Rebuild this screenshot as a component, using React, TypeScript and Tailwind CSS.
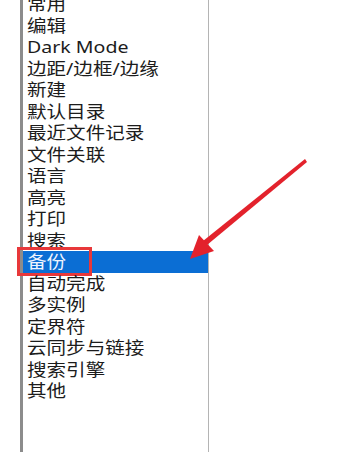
const items = [
  "常用",
  "编辑",
  "Dark Mode",
  "边距/边框/边缘",
  "新建",
  "默认目录",
  "最近文件记录",
  "文件关联",
  "语言",
  "高亮",
  "打印",
  "搜索",
  "备份",
  "自动完成",
  "多实例",
  "定界符",
  "云同步与链接",
  "搜索引擎",
  "其他",
]

const selected = "备份"

export default function App() {
  return (
    <div className="relative h-[459px] w-[356px] overflow-hidden bg-white font-['Noto_Sans','Noto_Sans_CJK_SC',sans-serif]">
      <div className="ml-[20px] h-full w-[189px] border-l-[3px] border-r border-l-[#8c8c8c] border-r-[#b4b4b4]">
        <ul className="-mt-[7px]">
          {items.map((label) => {
            const isSel = label === selected
            return (
              <li
                key={label}
                className={
                  isSel
                    ? "relative h-[21.5px] bg-[#0b6ed4] pl-[4px] text-[17px] leading-[21.5px] text-[#eef4ff]"
                    : "relative h-[21.5px] pl-[4px] text-[17px] leading-[21.5px] text-[#1c1c1c]"
                }
              >
                <span className="inline-block origin-left scale-x-[1.15] whitespace-nowrap">
                  {label}
                </span>
                {isSel && (
                  <span className="absolute -left-[6px] -top-[4px] h-[29px] w-[75px] border-[3px] border-[#e8383a]" />
                )}
              </li>
            )
          })}
        </ul>
      </div>

      {/* 指示箭头 */}
      <svg
        className="pointer-events-none absolute left-0 top-0"
        width="356"
        height="459"
        viewBox="0 0 356 459"
      >
        <polygon
          points="305,159 307,162 207,245 203,241"
          fill="#e3222c"
        />
        <polygon points="190,259 199,235 214,251" fill="#e3222c" />
      </svg>
    </div>
  )
}
